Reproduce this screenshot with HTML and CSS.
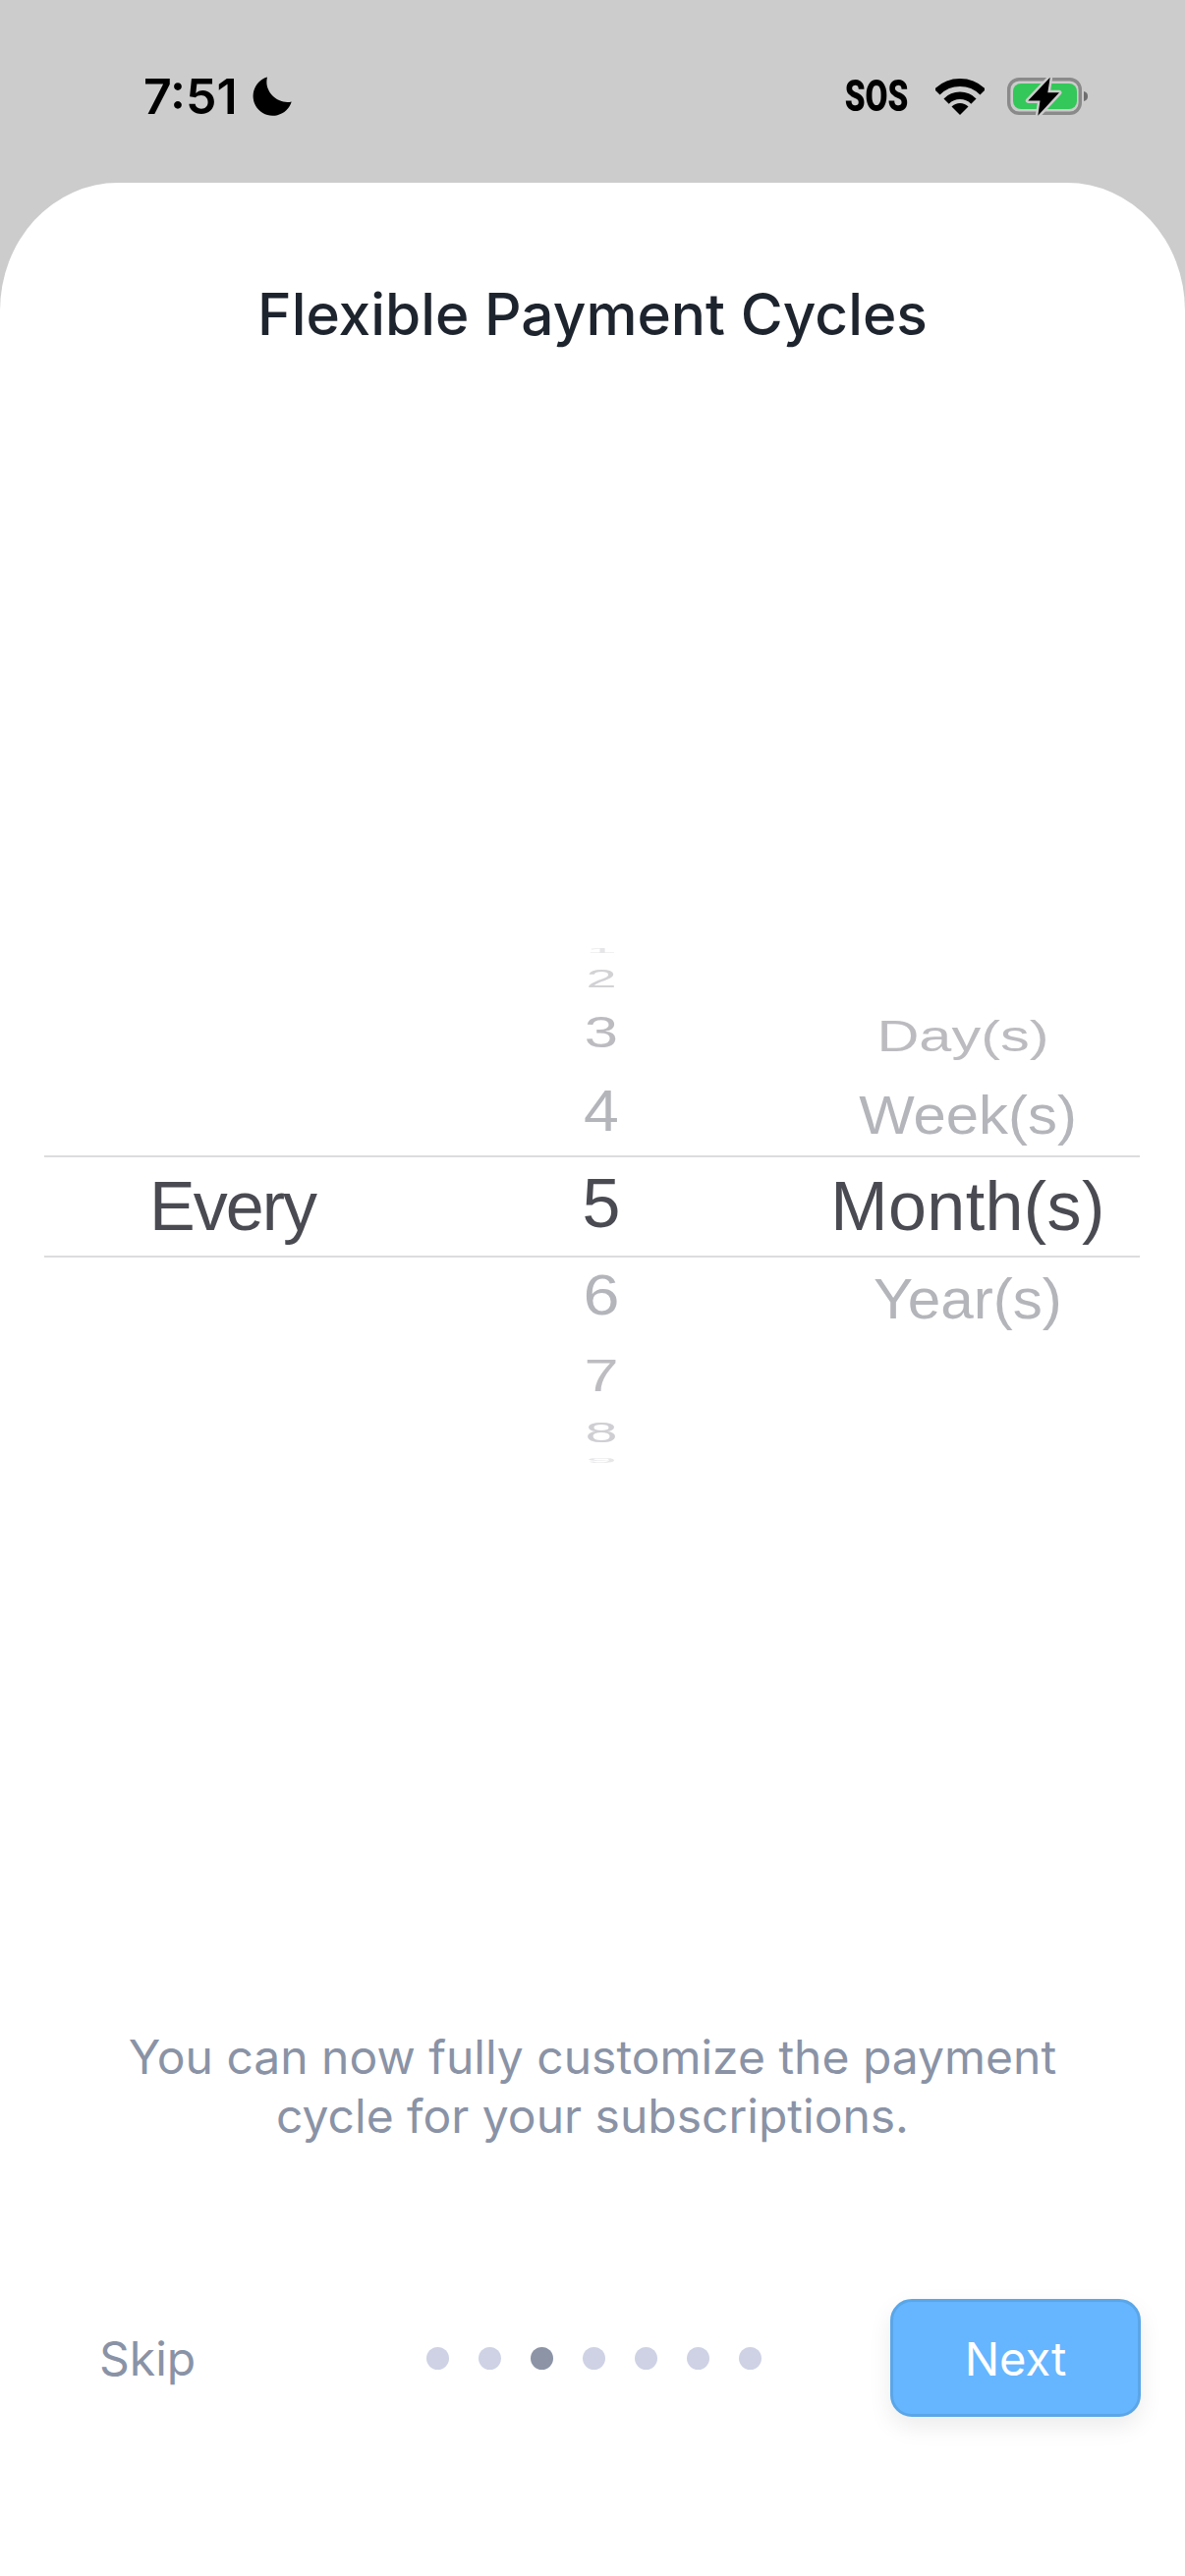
FILE: index.html
```html
<!DOCTYPE html>
<html lang="en">
<head>
  <meta charset="UTF-8" />
  <meta name="viewport" content="width=device-width, initial-scale=1.0" />
  <title>Flexible Payment Cycles</title>
  <link rel="stylesheet" href="styles.css">
</head>

<body>
  <div class="status-bar">
    <div class="status-left">
      <span class="time">7:51</span>
      <svg class="moon" viewBox="0 0 40 40"><path d="M15 .5A20 20 0 1 0 39.7 25.5C27 29 11 16 15 .5Z" /></svg>
    </div>
    <div class="status-right">
      <span class="sos">SOS</span>
      <svg class="wifi" viewBox="0 0 50 37">
        <path d="M1.7 13.7A33 33 0 0 1 48.3 13.7" fill="none" stroke="#000" stroke-width="8" />
        <path d="M11.1 23.1A19.7 19.7 0 0 1 38.9 23.1" fill="none" stroke="#000" stroke-width="7.5" />
        <path d="M25 37L16.5 28.5A12 12 0 0 1 33.5 28.5Z" />
      </svg>
      <svg class="battery" viewBox="0 0 84 40">
        <rect x="1.7" y="2.7" width="72.6" height="34.6" rx="10.5" fill="none" stroke="#8a8a8a" stroke-width="3.4" />
        <rect x="6" y="7" width="65" height="26" rx="8" fill="#34c759" />
        <path d="M78 15a6 5 0 0 1 4 5a6 5 0 0 1 -4 5Z" fill="#6e6e6e" />
        <path d="M43.7 .8L21.3 24.5H33.5L31.3 39.8L53 16.3H41.3Z" stroke="#ccc" stroke-width="5" paint-order="stroke" stroke-linejoin="round" />
      </svg>
    </div>
  </div>

  <div class="sheet">
    <h1 class="title">Flexible Payment Cycles</h1>

    <div class="picker">
      <div class="picker-band"></div>
      <div class="col-label">Every</div>
      <div class="col-wheel">
        <div class="num n1">1</div>
        <div class="num n2">2</div>
        <div class="num n3">3</div>
        <div class="num n4">4</div>
        <div class="num n5">5</div>
        <div class="num n6">6</div>
        <div class="num n7">7</div>
        <div class="num n8">8</div>
        <div class="num n9">9</div>
      </div>
      <div class="col-units">
        <div class="unit u-day">Day(s)</div>
        <div class="unit u-week">Week(s)</div>
        <div class="unit u-month">Month(s)</div>
        <div class="unit u-year">Year(s)</div>
      </div>
    </div>

    <p class="desc">You can now fully customize the payment<br />cycle for your subscriptions.</p>

    <div class="footer">
      <span class="skip">Skip</span>
      <div class="dots">
        <span class="dot"></span>
        <span class="dot"></span>
        <span class="dot active"></span>
        <span class="dot"></span>
        <span class="dot"></span>
        <span class="dot"></span>
        <span class="dot"></span>
      </div>
      <button class="next-btn">Next</button>
    </div>
  </div>
</body>
</html>
```

FILE: styles.css
```css
* {
  box-sizing: border-box;
}

body {
  background-color: #cccccc;
  margin: 0;
  width: 1206px;
  height: 2622px;
  display: flex;
  flex-direction: column;
  font-family: Inter, "Liberation Sans", sans-serif;
  overflow: hidden;
}

.status-bar {
  height: 186px;
  flex-shrink: 0;
  padding: 10px 97px 0 146px;
  display: flex;
  justify-content: space-between;
  align-items: center;
}

.status-left,
.status-right {
  display: flex;
  align-items: center;
}

.time {
  font-size: 50px;
  font-weight: 600;
  line-height: 60px;
  color: #000;
}

.moon {
  width: 40px;
  height: 40px;
  margin-left: 15px;
}

.sos {
  font-family: Roboto, sans-serif;
  font-size: 45px;
  font-weight: 900;
  line-height: 50px;
  color: #000;
  width: 66px;
  display: flex;
  justify-content: center;
  transform: scaleX(0.74);
}

.wifi {
  width: 50px;
  height: 37px;
  margin-left: 27px;
  margin-right: 23px;
}

.battery {
  width: 84px;
  height: 40px;
}

.sheet {
  flex: 1;
  background: white;
  border-radius: 120px 120px 0 0 / 130px 130px 0 0;
  display: flex;
  flex-direction: column;
}

.title {
  margin: 99px 0 0;
  font-size: 58.6px;
  font-weight: 500;
  line-height: 70px;
  text-align: center;
  color: #1e242e;
}

.picker {
  position: relative;
  margin: 605px 46px 0 45px;
  height: 537px;
  display: grid;
  grid-template-columns: 390px 354px 1fr;
  font-family: "Liberation Sans", sans-serif;
  font-size: 70px;
  color: #4a4b52;
}

.picker-band {
  position: absolute;
  top: 216px;
  left: 0;
  right: 0;
  height: 104px;
  border-top: 2px solid #dcdcde;
  border-bottom: 2px solid #dcdcde;
}

.col-label {
  padding: 216px 7px 0 0;
  line-height: 104px;
  letter-spacing: -2px;
  text-align: center;
  filter: blur(0.4px);
}

.col-wheel,
.col-units {
  text-align: center;
  filter: blur(0.4px);
}

.col-units {
  padding-top: 56px;
  padding-left: 21px;
}

.num {
  display: flex;
  align-items: center;
  justify-content: center;
  color: #b4b5ba;
}

.n1 { height: 16px; transform: scale(0.8, 0.09); color: #e6e6e8; }
.n2 { height: 40px; transform: scale(0.8, 0.36); color: #d2d2d5; }
.n3 { height: 70px; transform: scale(0.88, 0.64); color: #bcbcc0; }
.n4 { height: 90px; transform: scale(0.92, 0.84); }
.n5 { height: 98px; color: #4a4b52; }
.n6 { height: 87px; transform: scale(0.95, 0.82); }
.n7 { height: 77px; transform: scale(0.9, 0.66); color: #bdbdc1; }
.n8 { height: 39px; transform: scale(0.85, 0.42); color: #cfcfd3; }
.n9 { height: 20px; transform: scale(0.8, 0.1); color: #e6e6e8; }

.unit {
  color: #b4b5ba;
  white-space: nowrap;
}

.u-day { line-height: 78px; height: 78px; transform: translateX(-5px) scale(0.85, 0.64); color: #bcbcc0; }
.u-week { line-height: 82px; height: 82px; transform: scale(0.855, 0.8); }
.u-month { line-height: 104px; height: 104px; letter-spacing: 0.4px; color: #4a4b52; }
.u-year { line-height: 85px; height: 85px; transform: scale(0.86, 0.82); }

.desc {
  margin: 567px 0 0;
  font-size: 48px;
  line-height: 60px;
  text-align: center;
  color: #8a93a6;
}

.footer {
  margin-top: 156px;
  padding: 0 45px 0 101px;
  display: flex;
  align-items: center;
}

.skip {
  width: 333px;
  font-size: 48px;
  color: #8a93a6;
}

.dots {
  display: flex;
  gap: 30px;
}

.dot {
  width: 23px;
  height: 23px;
  border-radius: 50%;
  background-color: #ced2e4;
}

.dot.active {
  background-color: #8c94a6;
}

.next-btn {
  margin-left: auto;
  width: 255px;
  height: 120px;
  background-color: #66b5ff;
  color: white;
  border: 3px solid #5aa6e8;
  border-radius: 22px;
  box-shadow: 0 10px 24px rgba(0, 0, 0, 0.08);
  font-family: Inter, sans-serif;
  font-size: 47px;
}
```
